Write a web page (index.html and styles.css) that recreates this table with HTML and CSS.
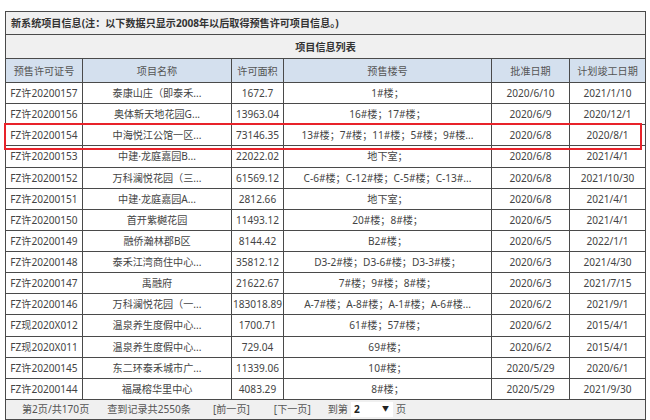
FILE: index.html
```html
<!DOCTYPE html>
<html lang="zh-CN">
<head>
<meta charset="utf-8">
<title>新系统项目信息</title>
<link rel="stylesheet" href="styles.css">
</head>
<body>
<div class="page">
  <table class="grid">
    <colgroup>
      <col class="c1"><col class="c2"><col class="c3"><col class="c4"><col class="c5"><col class="c6">
    </colgroup>
    <tr class="title-row"><td colspan="6">新系统项目信息(注：以下数据只显示2008年以后取得预售许可项目信息。)</td></tr>
    <tr class="caption-row"><td colspan="6">项目信息列表</td></tr>
    <tr class="head-row">
      <th>预售许可证号</th><th>项目名称</th><th>许可面积</th><th>预售楼号</th><th>批准日期</th><th>计划竣工日期</th>
    </tr>
    <tr class="data-row"><td>FZ许20200157</td><td>泰康山庄（即泰禾...</td><td>1672.7</td><td>1#楼；</td><td>2020/6/10</td><td>2021/1/10</td></tr>
    <tr class="data-row"><td>FZ许20200156</td><td>奥体新天地花园G...</td><td>13963.04</td><td>16#楼；17#楼；</td><td>2020/6/9</td><td>2020/12/1</td></tr>
    <tr class="data-row"><td>FZ许20200154</td><td>中海悦江公馆一区...</td><td>73146.35</td><td>13#楼；7#楼；11#楼；5#楼；9#楼...</td><td>2020/6/8</td><td>2020/8/1</td></tr>
    <tr class="data-row"><td>FZ许20200153</td><td>中建·龙庭嘉园B...</td><td>22022.02</td><td>地下室；</td><td>2020/6/8</td><td>2021/4/1</td></tr>
    <tr class="data-row"><td>FZ许20200152</td><td>万科澜悦花园（三...</td><td>61569.12</td><td>C-6#楼；C-12#楼；C-5#楼；C-13#...</td><td>2020/6/8</td><td>2021/10/30</td></tr>
    <tr class="data-row"><td>FZ许20200151</td><td>中建·龙庭嘉园A...</td><td>2812.66</td><td>地下室；</td><td>2020/6/8</td><td>2021/4/1</td></tr>
    <tr class="data-row"><td>FZ许20200150</td><td>首开紫樾花园</td><td>11493.12</td><td>20#楼；8#楼；</td><td>2020/6/5</td><td>2021/4/1</td></tr>
    <tr class="data-row"><td>FZ许20200149</td><td>融侨瀚林郡B区</td><td>8144.42</td><td>B2#楼；</td><td>2020/6/5</td><td>2022/1/1</td></tr>
    <tr class="data-row"><td>FZ许20200148</td><td>泰禾江湾商住中心...</td><td>35812.12</td><td>D3-2#楼；D3-6#楼；D3-3#楼；</td><td>2020/6/3</td><td>2021/4/30</td></tr>
    <tr class="data-row"><td>FZ许20200147</td><td>禹融府</td><td>21622.67</td><td>7#楼；9#楼；8#楼；</td><td>2020/6/3</td><td>2021/7/15</td></tr>
    <tr class="data-row"><td>FZ许20200146</td><td>万科澜悦花园（一...</td><td>183018.89</td><td>A-7#楼；A-8#楼；A-1#楼；A-6#楼...</td><td>2020/6/2</td><td>2021/9/1</td></tr>
    <tr class="data-row"><td>FZ现2020X012</td><td>温泉养生度假中心...</td><td>1700.71</td><td>61#楼；57#楼；</td><td>2020/6/2</td><td>2015/4/1</td></tr>
    <tr class="data-row"><td>FZ现2020X011</td><td>温泉养生度假中心...</td><td>729.04</td><td>69#楼；</td><td>2020/6/2</td><td>2015/4/1</td></tr>
    <tr class="data-row"><td>FZ许20200145</td><td>东二环泰禾城市广...</td><td>11339.06</td><td>10#楼；</td><td>2020/5/29</td><td>2020/6/1</td></tr>
    <tr class="data-row"><td>FZ许20200144</td><td>福晟榕华里中心</td><td>4083.29</td><td>8#楼；</td><td>2020/5/29</td><td>2021/9/30</td></tr>
    <tr class="foot-row">
      <td colspan="6">
        <div class="pager">
          <span class="pg-a">第2页/共170页</span>
          <span class="pg-b">查到记录共2550条</span>
          <span class="pg-c">[前一页]</span>
          <span class="pg-d">[下一页]</span>
          <span class="pg-e">到第</span>
          <span class="select"><span class="sel-val">2</span><span class="sel-arrow">▼</span></span>
          <span class="pg-f">页</span>
        </div>
      </td>
    </tr>
  </table>
  <div class="highlight"></div>
</div>
</body>
</html>
```

FILE: styles.css
```css
html, body {
  margin: 0;
  padding: 0;
  background: #ffffff;
}

.page {
  position: relative;
  padding: 11px 0 0 5px;
  font-family: "Noto Sans", "Noto Sans CJK SC", sans-serif;
  font-size: 10.1px;
  color: #444;
}

.grid {
  border-collapse: collapse;
  table-layout: fixed;
  width: 640px;
  border: 1px solid #4a4a4a;
}

.c1 { width: 77px; }
.c2 { width: 149px; }
.c3 { width: 52px; }
.c4 { width: 208px; }
.c5 { width: 78px; }
.c6 { width: 76px; }

.grid td, .grid th {
  border: 1px solid #4a4a4a;
  padding: 0;
  text-align: center;
  white-space: nowrap;
  overflow: hidden;
  line-height: 12px;
}

.title-row td {
  height: 22px;
  background: #f0f0f0;
  text-align: left;
  padding-left: 5px;
  font-weight: bold;
  color: #333;
}

.caption-row td {
  height: 23px;
  background: #f0f0f0;
  font-weight: bold;
  color: #333;
}

.head-row th {
  height: 23px;
  background: #d4e0ee;
  font-weight: normal;
  color: #555;
}

.data-row td {
  height: 20.13px;
  background: #ffffff;
  color: #444;
}

.foot-row td {
  height: 19px;
  background: #f0f0f0;
  color: #555;
  text-align: left;
}

.pager {
  display: flex;
  align-items: center;
  padding-left: 16px;
}

.pg-b { margin-left: 18px; }
.pg-c { margin-left: 22px; }
.pg-d { margin-left: 24px; }
.pg-e { margin-left: 17px; }
.pg-f { margin-left: 3px; }

.select {
  display: inline-flex;
  align-items: center;
  justify-content: space-between;
  margin-left: 3px;
  width: 42px;
  height: 15px;
  background: #ffffff;
  padding: 0 4px 0 3px;
  box-sizing: border-box;
}

.sel-val {
  color: #222;
  font-weight: bold;
}

.sel-arrow {
  font-size: 7px;
  color: #222;
}

.highlight {
  position: absolute;
  left: 4px;
  top: 123px;
  width: 638px;
  height: 27px;
  border: 2px solid #e8232a;
  box-sizing: border-box;
  pointer-events: none;
}
```
